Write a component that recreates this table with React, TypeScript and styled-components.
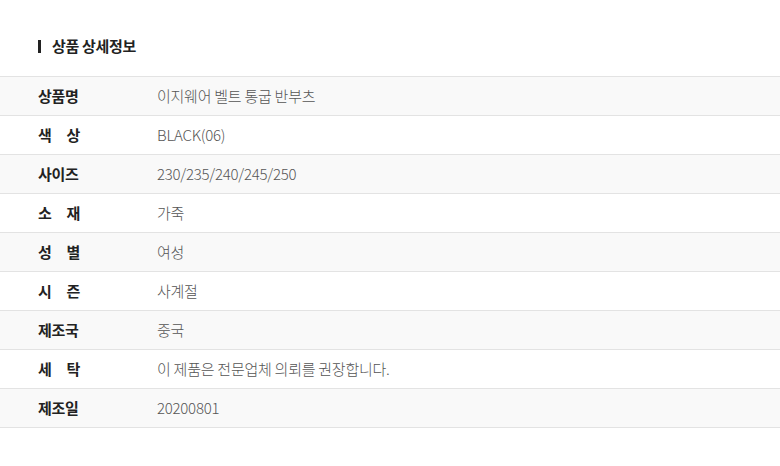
import React from "react"
import styled, { createGlobalStyle } from "styled-components"

const GlobalStyle = createGlobalStyle`
  html, body {
    margin: 0;
    padding: 0;
    background: #fff;
  }
  body {
    font-family: "Noto Sans CJK KR", "Noto Sans", sans-serif;
    -webkit-font-smoothing: antialiased;
  }
`

const Section = styled.section`
  width: 780px;
  height: 466px;
  background: #fff;
`

const Title = styled.h3`
  margin: 0;
  height: 76px;
  box-sizing: border-box;
  padding: 37px 0 0 38px;
  display: flex;
  align-items: flex-start;
  gap: 11px;
  font-size: 15px;
  line-height: 18px;
  font-weight: 700;
  color: #222;
  letter-spacing: -0.3px;
`

const TitleBar = styled.span`
  width: 3px;
  height: 13px;
  margin-top: 3px;
  background: #222;
`

const Table = styled.div`
  border-top: 1px solid #e3e3e3;
`

const Row = styled.div<{ $shaded: boolean }>`
  display: grid;
  grid-template-columns: 119px 1fr;
  align-items: center;
  height: 38px;
  padding-left: 38px;
  border-bottom: 1px solid #e3e3e3;
  background: ${(p) => (p.$shaded ? "#f9f9f9" : "#fff")};
`

const Label = styled.span`
  display: inline-block;
  width: 42px;
  margin-top: -2px;
  font-size: 15px;
  font-weight: 700;
  color: #222;
  text-align: justify;
  text-align-last: justify;
  letter-spacing: -0.3px;
`

const Value = styled.span`
  margin-top: -2px;
  font-size: 15px;
  font-weight: 300;
  color: #555;
  letter-spacing: -0.25px;
`

const rows = [
  { label: "상품명", value: "이지웨어 벨트 통굽 반부츠" },
  { label: "색 상", value: "BLACK(06)" },
  { label: "사이즈", value: "230/235/240/245/250" },
  { label: "소 재", value: "가죽" },
  { label: "성 별", value: "여성" },
  { label: "시 즌", value: "사계절" },
  { label: "제조국", value: "중국" },
  { label: "세 탁", value: "이 제품은 전문업체 의뢰를 권장합니다." },
  { label: "제조일", value: "20200801" },
]

const App = () => {
  return (
    <>
      <GlobalStyle />
      <Section>
        <Title>
          <TitleBar />
          <span>상품 상세정보</span>
        </Title>
        <Table>
          {rows.map((row, i) => (
            <Row key={row.label} $shaded={i % 2 === 0}>
              <Label>{row.label}</Label>
              <Value>{row.value}</Value>
            </Row>
          ))}
        </Table>
      </Section>
    </>
  )
}

export default App
